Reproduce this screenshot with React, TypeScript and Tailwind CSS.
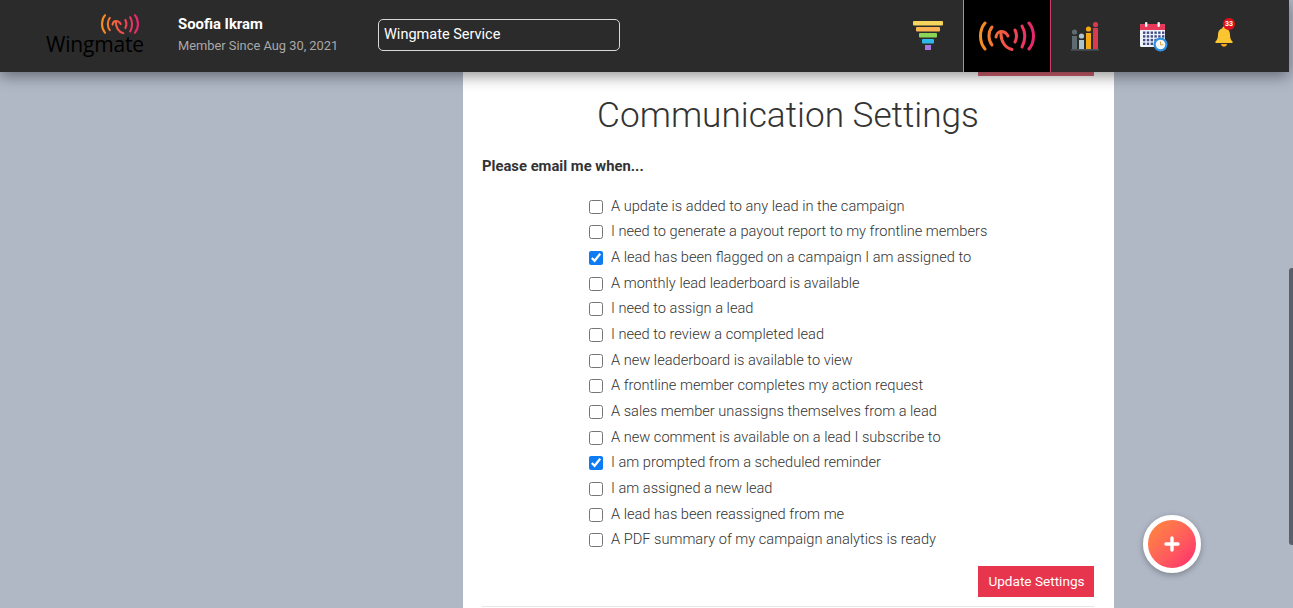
const options = [
  { label: 'A update is added to any lead in the campaign', checked: false },
  { label: 'I need to generate a payout report to my frontline members', checked: false },
  { label: 'A lead has been flagged on a campaign I am assigned to', checked: true },
  { label: 'A monthly lead leaderboard is available', checked: false },
  { label: 'I need to assign a lead', checked: false },
  { label: 'I need to review a completed lead', checked: false },
  { label: 'A new leaderboard is available to view', checked: false },
  { label: 'A frontline member completes my action request', checked: false },
  { label: 'A sales member unassigns themselves from a lead', checked: false },
  { label: 'A new comment is available on a lead I subscribe to', checked: false },
  { label: 'I am prompted from a scheduled reminder', checked: true },
  { label: 'I am assigned a new lead', checked: false },
  { label: 'A lead has been reassigned from me', checked: false },
  { label: 'A PDF summary of my campaign analytics is ready', checked: false }
]

function SignalIcon({ id, className }: { id: string; className: string }) {
  return (
    <svg viewBox="0 0 56 30" fill="none" className={className}>
      <defs>
        <linearGradient id={id} gradientUnits="userSpaceOnUse" x1="0" y1="0" x2="56" y2="0">
          <stop offset="0" stopColor="#f7941d" />
          <stop offset="0.5" stopColor="#f2504a" />
          <stop offset="1" stopColor="#e8246f" />
        </linearGradient>
      </defs>
      <g stroke={`url(#${id})`} strokeWidth="3" strokeLinecap="round">
        <path d="M6 2C0 9 0 21 6 28" />
        <path d="M13 6C9 11 9 19 13 24" />
        <path d="M17 16C17.5 12.5 20 10.5 22 10.5C25 10.5 27.5 12 29 15" />
        <path d="M22 11C21.5 20 26 27 33 28.5" />
        <path d="M36 9C38 13 38 17 36 21" />
        <path d="M43 5C46.5 11 46.5 19 43 26" />
        <path d="M50 2C56 9 56 21 50 28" />
      </g>
    </svg>
  )
}

function FunnelIcon() {
  return (
    <svg viewBox="0 0 30 30" className="w-[30px] h-[30px]">
      <rect x="0" y="0" width="30" height="4.5" rx="1" fill="#f6d55c" />
      <rect x="3" y="6" width="24" height="4.5" rx="1" fill="#fbb454" />
      <rect x="6" y="12" width="18" height="4.5" rx="1" fill="#8bd455" />
      <rect x="9" y="18" width="12" height="4.5" rx="1" fill="#2db8e8" />
      <rect x="12" y="24" width="6" height="5" fill="#a678e2" />
    </svg>
  )
}

function ChartIcon() {
  return (
    <svg viewBox="0 0 28 29" className="w-[28px] h-[29px]">
      <rect x="1" y="14" width="5" height="13" fill="#5f6b73" />
      <rect x="8" y="18" width="5" height="9" fill="#a9c4cc" />
      <rect x="15" y="11" width="5" height="16" fill="#f5a811" />
      <rect x="22" y="6" width="5" height="21" fill="#d93a4e" />
      <circle cx="3.5" cy="10" r="2.6" fill="#5f6b73" />
      <circle cx="10.5" cy="14" r="2.6" fill="#a9c4cc" />
      <circle cx="17.5" cy="7" r="2.6" fill="#f5a811" />
      <circle cx="24.5" cy="2.6" r="2.6" fill="#d93a4e" />
      <rect x="0" y="27" width="28" height="1.6" fill="#4a5358" />
    </svg>
  )
}

function CalendarIcon() {
  const cells = []
  for (let row = 0; row < 4; row++) {
    for (let col = 0; col < 6; col++) {
      cells.push(<rect key={`${row}-${col}`} x={3 + col * 3.8} y={9.5 + row * 3.7} width="2.4" height="2.4" fill="#3f4f86" />)
    }
  }
  return (
    <svg viewBox="0 0 28 30" className="w-[28px] h-[30px]">
      <rect x="0" y="2" width="25" height="23" rx="1.5" fill="#f1f3fb" />
      <path d="M0 8V3.5A1.5 1.5 0 0 1 1.5 2H23.5A1.5 1.5 0 0 1 25 3.5V8Z" fill="#e8395a" />
      <rect x="5" y="0" width="2.4" height="5" rx="1" fill="#f1f3fb" />
      <rect x="17.5" y="0" width="2.4" height="5" rx="1" fill="#f1f3fb" />
      {cells}
      <circle cx="20.5" cy="22.5" r="7" fill="#2f8fe0" />
      <circle cx="20.5" cy="22.5" r="4.8" fill="#f4f7fb" />
      <path d="M20.5 19.5V22.8H23.5" stroke="#e8a33d" strokeWidth="1" fill="none" />
    </svg>
  )
}

function BellIcon() {
  return (
    <div className="relative w-[18px] h-[21px]">
      <svg viewBox="0 0 18 21" className="w-[18px] h-[21px]">
        <path d="M9 0.5C10 0.5 10.6 1.2 10.6 2.2C13.5 3 15 5.5 15 8.5C15 12 15.8 14 17.5 15.6C18 16.2 17.6 17 17 17H1C0.4 17 0 16.2 0.5 15.6C2.2 14 3 12 3 8.5C3 5.5 4.5 3 7.4 2.2C7.4 1.2 8 0.5 9 0.5Z" fill="#fbc531" />
        <path d="M6 18H12C11.8 19.8 10.5 20.8 9 20.8C7.5 20.8 6.2 19.8 6 18Z" fill="#f5a811" />
      </svg>
      <span className="absolute -top-[8px] left-[8px] w-[12px] h-[12px] rounded-full bg-[#e0101e] text-white text-[7px] font-bold leading-[12px] text-center">
        33
      </span>
    </div>
  )
}

export default function App() {
  return (
    <div className="relative flex w-[1293px] h-[608px] overflow-hidden bg-[#b0b8c6] font-['Roboto',sans-serif]">
      <div className="flex flex-col w-[1289px]">
        <header className="relative z-10 flex items-center h-[72px] shrink-0 bg-[#2b2b2b] shadow-[0_4px_14px_rgba(0,0,0,0.42)]">
          <div className="relative w-[98px] h-[45px] ml-[46px] mt-[1px]">
            <SignalIcon id="logo-signal" className="absolute left-[55px] -top-[1px] w-[38px] h-[22px]" />
            <span className="absolute left-0 top-[15px] font-['Open_Sans',sans-serif] text-[21px] leading-[30px] tracking-[-0.2px] text-black">
              Wingmate
            </span>
          </div>
          <div className="ml-[34px] -mt-[3px] w-[200px]">
            <p className="text-[14.85px] leading-[18px] font-bold text-white">Soofia Ikram</p>
            <p className="mt-[5px] text-[12.85px] leading-[16px] text-[#a9a9a9]">Member Since Aug 30, 2021</p>
          </div>
          <div className="w-[242px] h-[32px] mb-[2px] px-[5px] flex items-center border border-[#d8d8d8] rounded-[5px] text-[14.5px] text-white">
            Wingmate Service
          </div>
          <div className="flex items-center justify-center w-[30px] ml-[293px]">
            <FunnelIcon />
          </div>
          <div className="flex items-center justify-center w-[88px] h-full ml-[20px] bg-black border-l border-l-[#ea7f4f] border-r border-r-[#c93a6c]">
            <SignalIcon id="tab-signal" className="w-[56px] h-[30px]" />
          </div>
          <div className="ml-[20px]">
            <ChartIcon />
          </div>
          <div className="ml-[41px] mt-[2px]">
            <CalendarIcon />
          </div>
          <div className="ml-[47px]">
            <BellIcon />
          </div>
        </header>

        <main className="flex-1 min-h-0 pl-[463px]">
          <section className="flex flex-col w-[651px] h-full bg-white pl-[19px] pr-[20px]">
            <div className="self-end w-[116px] h-[4px] bg-[#d0606f]" />
            <h1 className="mt-[15px] text-center text-[35.2px] leading-[48px] font-light text-[#333]">
              Communication Settings
            </h1>
            <p className="mt-[17px] text-[14.8px] leading-[20px] font-bold text-[#333]">Please email me when...</p>
            <ul className="mt-[18px] pl-[107px]">
              {options.map((option) => (
                <li key={option.label} className="flex items-center h-[25.65px]">
                  <input
                    type="checkbox"
                    readOnly
                    checked={option.checked}
                    className="w-[14px] h-[14px] shrink-0 accent-[#0d7bf2]"
                  />
                  <span className="ml-[8px] text-[14.62px] font-light text-[#333]">{option.label}</span>
                </li>
              ))}
            </ul>
            <div className="flex justify-end mt-[13px]">
              <button className="w-[116px] h-[31px] pl-[1px] pb-[1px] bg-[#e8354e] text-white text-[13.6px]">Update Settings</button>
            </div>
            <div className="mt-[9px] h-px bg-[#e6e6e6]" />
          </section>
        </main>
      </div>

      <div className="w-[4px] pt-[268px]">
        <div className="h-[277px] rounded-l-[3px] bg-[#5a5f6a]" />
      </div>

      <button className="absolute left-[1143px] top-[515px] flex items-center justify-center w-[58px] h-[58px] rounded-full border-[5px] border-white bg-gradient-to-br from-[#ff8a35] to-[#ff1f6e] shadow-[0_2px_6px_rgba(0,0,0,0.3)]">
        <svg viewBox="0 0 16 16" className="w-[16px] h-[16px]">
          <path d="M8 2V14M2 8H14" stroke="#fff" strokeWidth="3.4" strokeLinecap="round" />
        </svg>
      </button>
    </div>
  )
}
